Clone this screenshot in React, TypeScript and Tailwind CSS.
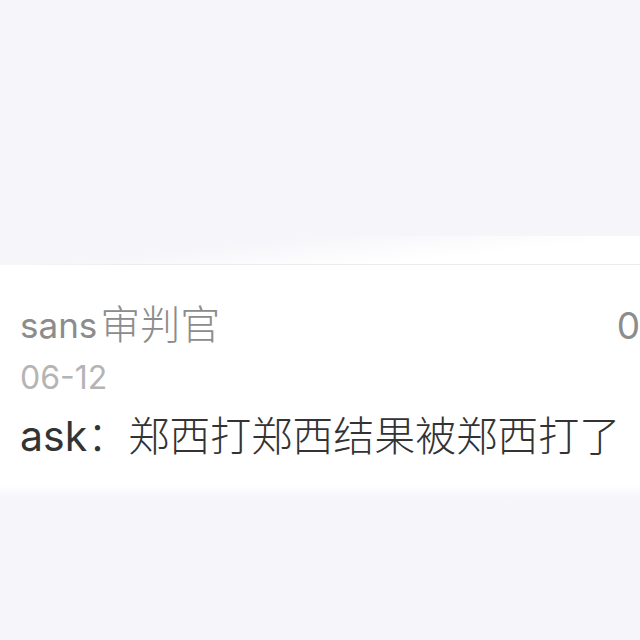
export default function App() {
  return (
    <div
      className="min-h-[640px] w-[640px] overflow-hidden bg-[#f6f6fa] flex flex-col"
      style={{ fontFamily: 'Inter, "Noto Sans CJK SC", sans-serif' }}
    >
      <div className="h-[236px]" />
      {/* soft white sweep above the card */}
      <div className="h-[28px] bg-[linear-gradient(174deg,#f6f6fa_0%,#f6f6fa_35%,#ffffff_72%,#ffffff_100%)]" />
      <div className="h-px bg-[linear-gradient(90deg,#f8f8f8,#ececec_20%,#ececec)]" />

      <div className="bg-white pl-[20px] pt-[38px] pb-[26px]">
        <div className="h-[44px] flex items-center justify-between leading-none text-[#8c8c8c]">
          <div className="whitespace-nowrap flex items-center">
            <span className="text-[35px]">sans</span>
            <span className="ml-[3px] text-[40px] font-light">审判官</span>
          </div>
          <div className="text-[37px]">0</div>
        </div>
        <div className="mt-[11px] text-[32px] leading-[40px] text-[#b4b4b4]">06-12</div>
        <div className="mt-[14px] h-[48px] flex items-center leading-none text-[41px] text-[#333333] whitespace-nowrap">
          <span>ask</span>
          <span className="font-light">：郑西打郑西结果被郑西打了</span>
        </div>
      </div>

      <div className="h-[12px] bg-[linear-gradient(180deg,#ffffff,#f6f6fa)]" />
      <div className="flex-1" />
    </div>
  );
}
